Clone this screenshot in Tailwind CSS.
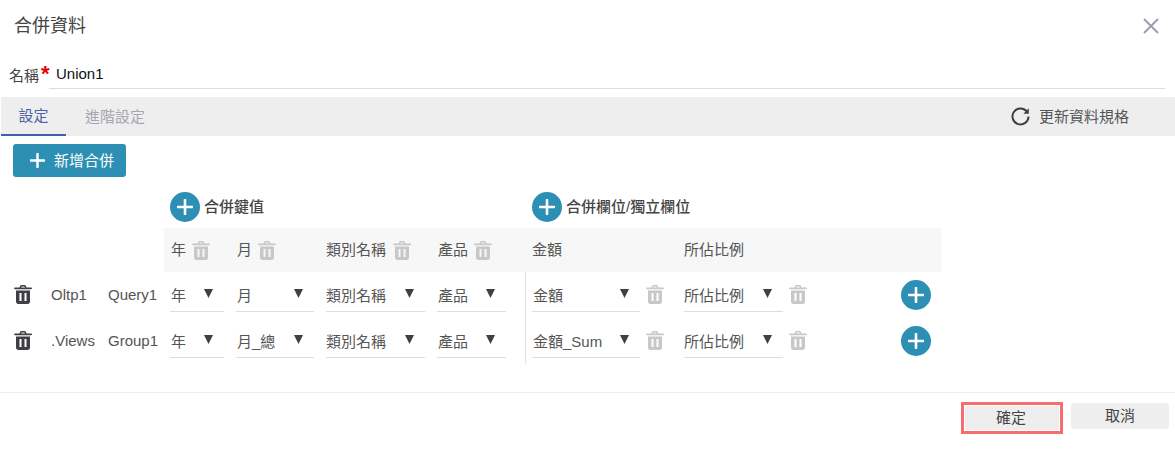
<!DOCTYPE html>
<html lang="zh-Hant">
<head>
<meta charset="utf-8">
<script src="https://cdn.jsdelivr.net/npm/@tailwindcss/browser@4"></script>
<title>合併資料</title>
</head>
<body class="h-[457px] w-[1175px] overflow-hidden bg-white text-[15px] text-[#555] font-['Liberation_Sans','Noto_Sans_CJK_TC',sans-serif]">
<svg width="0" height="0" class="absolute">
  <symbol id="trash" viewBox="0 0 18 19"><path fill-rule="evenodd" d="M5.5 2.4 6.2.8C6.4.3 6.8 0 7.3 0h3.4c.5 0 .9.3 1.1.8l.7 1.6H17c.6 0 1 .4 1 .9s-.4.9-1 .9H1c-.6 0-1-.4-1-.9s.4-.9 1-.9h4.5Zm1.6 0h3.8l-.4-1H7.500ZM2 5.500h14V16.500c0 1.400-1 2.500-2.300 2.500H4.300C3 19 2 17.900 2 16.500V5.500Zm3.500 2.500v8h2V8h-2Zm5 0v8h2V8h-2Z"/></symbol>
  <symbol id="plus" viewBox="0 0 16 16"><path d="M8 1v14M1 8h14" fill="none" stroke="currentColor" stroke-width="2.600" stroke-linecap="round"/></symbol>
  <symbol id="caret" viewBox="0 0 9 9"><path d="M0 0h9L4.500 9Z"/></symbol>
</svg>

<header class="flex h-[52px] items-center justify-between pl-[14px] pr-[16px]">
  <h1 class="text-[18px] font-normal text-[#444]">合併資料</h1>
  <svg class="h-[16px] w-[16px] text-[#9a9aae]" viewBox="0 0 16 16"><path d="M1 1l14 14M15 1 1 15" stroke="currentColor" stroke-width="1.800" fill="none"/></svg>
</header>

<div class="flex h-[37px] items-center pl-[9px] pr-[10px]">
  <span class="mt-[12px] text-[#444]">名稱</span>
  <span class="mt-[7px] ml-[2px] w-[8px] text-[22px] font-bold leading-none text-[#e8000b]">*</span>
  <div class="flex h-[37px] flex-1 items-center border-b border-[#ddd] pl-[7px] pt-[8px] text-[#111]">Union1</div>
</div>

<nav class="ml-px mt-[8px] flex h-[39px] items-stretch justify-between bg-[#eeeeee]">
  <div class="flex">
    <div class="flex w-[65px] items-center justify-center border-b-2 border-[#4060a8] pt-[2px] text-[#4a62a8]">設定</div>
    <div class="ml-[19px] flex items-center pt-[2px] text-[#a6a6b0]">進階設定</div>
  </div>
  <div class="flex items-center pr-[46px] text-[#555]">
    <svg class="mr-[9px] h-[19px] w-[19px] text-[#3f3f48]" viewBox="0 0 19 19"><path d="M15.700 4.400A8 8 0 1 0 17.500 9.500" fill="none" stroke="currentColor" stroke-width="2"/><path d="M17.800 1.300v5.400h-5.400Z" fill="currentColor"/></svg>
    <span class="pt-px">更新資料規格</span>
  </div>
</nav>

<button class="ml-[13px] mt-[8px] flex h-[33px] w-[113px] items-center rounded-[3px] bg-[#2d8fb3] pl-[17px] text-white">
  <svg class="h-[15px] w-[15px]"><use href="#plus"/></svg>
  <span class="ml-[9px] pt-[2px]">新增合併</span>
</button>

<section class="mt-[15px] flex h-[30px] items-center font-medium text-[#444]">
  <div class="ml-[170px] flex h-[30px] w-[30px] items-center justify-center rounded-full bg-[#2d8fb3] text-white"><svg class="h-[16px] w-[16px]"><use href="#plus"/></svg></div>
  <span class="ml-[4px] w-[328px] pt-px">合併鍵值</span>
  <div class="flex h-[30px] w-[30px] items-center justify-center rounded-full bg-[#2d8fb3] text-white"><svg class="h-[16px] w-[16px]"><use href="#plus"/></svg></div>
  <span class="ml-[4px] pt-px">合併欄位/獨立欄位</span>
</section>

<div class="ml-[164px] mt-[6px] flex h-[44px] w-[777px] items-center bg-[#f7f7f7] pt-px text-[#555]">
  <div class="ml-[7px] flex w-[59px] items-center gap-[6px]">年<svg class="h-[19px] w-[18px] text-[#c8c8c8] fill-current"><use href="#trash"/></svg></div>
  <div class="ml-[7px] flex w-[89px] items-center gap-[6px]">月<svg class="h-[19px] w-[18px] text-[#c8c8c8] fill-current"><use href="#trash"/></svg></div>
  <div class="flex w-[112px] items-center gap-[7px]">類別名稱<svg class="h-[19px] w-[18px] text-[#c8c8c8] fill-current"><use href="#trash"/></svg></div>
  <div class="flex w-[94px] items-center gap-[6px]">產品<svg class="h-[19px] w-[18px] text-[#c8c8c8] fill-current"><use href="#trash"/></svg></div>
  <div class="w-[152px]">金額</div>
  <div>所佔比例</div>
</div>

<div class="flex h-[46px] items-start pl-[14px]">
  <svg class="mt-[13px] h-[19px] w-[18px] text-[#3f3f48] fill-current"><use href="#trash"/></svg>
  <span class="ml-[20px] mt-[12px] w-[56px] -translate-x-px">Oltp1</span>
  <span class="mt-[12px] w-[62px]">Query1</span>
  <div class="mt-[6px] flex h-[34px] w-[54px] items-center justify-between border-b border-[#ddd] pl-px pr-[11px] pt-[3px]">年<svg class="mb-[5px] h-[9px] w-[9px] text-[#3f3f48] fill-current"><use href="#caret"/></svg></div>
  <div class="ml-[12px] mt-[6px] flex h-[34px] w-[78px] items-center justify-between border-b border-[#ddd] pl-px pr-[11px] pt-[3px]">月<svg class="mb-[5px] h-[9px] w-[9px] text-[#3f3f48] fill-current"><use href="#caret"/></svg></div>
  <div class="ml-[12px] mt-[6px] flex h-[34px] w-[99px] items-center justify-between border-b border-[#ddd] pr-[11px] pt-[3px]">類別名稱<svg class="mb-[5px] h-[9px] w-[9px] text-[#3f3f48] fill-current"><use href="#caret"/></svg></div>
  <div class="ml-[12px] mt-[6px] flex h-[34px] w-[69px] items-center justify-between border-b border-[#ddd] pl-px pr-[11px] pt-[3px]">產品<svg class="mb-[5px] h-[9px] w-[9px] text-[#3f3f48] fill-current"><use href="#caret"/></svg></div>
  <div class="ml-[19px] h-[46px] w-px bg-[#e4e4e4]"></div>
  <div class="ml-[6px] mt-[6px] flex h-[34px] w-[108px] items-center justify-between border-b border-[#ddd] pl-px pr-[11px] pt-[3px]">金額<svg class="mb-[5px] h-[9px] w-[9px] text-[#3f3f48] fill-current"><use href="#caret"/></svg></div>
  <svg class="ml-[6px] mt-[13px] h-[19px] w-[18px] text-[#c8c8c8] fill-current"><use href="#trash"/></svg>
  <div class="ml-[20px] mt-[6px] flex h-[34px] w-[99px] items-center justify-between border-b border-[#ddd] pr-[11px] pt-[3px]">所佔比例<svg class="mb-[5px] h-[9px] w-[9px] text-[#3f3f48] fill-current"><use href="#caret"/></svg></div>
  <svg class="ml-[6px] mt-[13px] h-[19px] w-[18px] text-[#c8c8c8] fill-current"><use href="#trash"/></svg>
  <div class="ml-[94px] mt-[8px] flex h-[30px] w-[30px] items-center justify-center rounded-full bg-[#2d8fb3] text-white"><svg class="h-[16px] w-[16px]"><use href="#plus"/></svg></div>
</div>

<div class="flex h-[46px] items-start pl-[14px]">
  <svg class="mt-[13px] h-[19px] w-[18px] text-[#3f3f48] fill-current"><use href="#trash"/></svg>
  <span class="ml-[20px] mt-[12px] w-[56px] -translate-x-px">.Views</span>
  <span class="mt-[12px] w-[62px]">Group1</span>
  <div class="mt-[6px] flex h-[34px] w-[54px] items-center justify-between border-b border-[#ddd] pl-px pr-[11px] pt-[3px]">年<svg class="mb-[5px] h-[9px] w-[9px] text-[#3f3f48] fill-current"><use href="#caret"/></svg></div>
  <div class="ml-[12px] mt-[6px] flex h-[34px] w-[78px] items-center justify-between border-b border-[#ddd] pl-px pr-[11px] pt-[3px]">月_總<svg class="mb-[5px] h-[9px] w-[9px] text-[#3f3f48] fill-current"><use href="#caret"/></svg></div>
  <div class="ml-[12px] mt-[6px] flex h-[34px] w-[99px] items-center justify-between border-b border-[#ddd] pr-[11px] pt-[3px]">類別名稱<svg class="mb-[5px] h-[9px] w-[9px] text-[#3f3f48] fill-current"><use href="#caret"/></svg></div>
  <div class="ml-[12px] mt-[6px] flex h-[34px] w-[69px] items-center justify-between border-b border-[#ddd] pl-px pr-[11px] pt-[3px]">產品<svg class="mb-[5px] h-[9px] w-[9px] text-[#3f3f48] fill-current"><use href="#caret"/></svg></div>
  <div class="ml-[19px] h-[46px] w-px bg-[#e4e4e4]"></div>
  <div class="ml-[6px] mt-[6px] flex h-[34px] w-[108px] items-center justify-between border-b border-[#ddd] pl-px pr-[11px] pt-[3px]">金額_Sum<svg class="mb-[5px] h-[9px] w-[9px] text-[#3f3f48] fill-current"><use href="#caret"/></svg></div>
  <svg class="ml-[6px] mt-[13px] h-[19px] w-[18px] text-[#c8c8c8] fill-current"><use href="#trash"/></svg>
  <div class="ml-[20px] mt-[6px] flex h-[34px] w-[99px] items-center justify-between border-b border-[#ddd] pr-[11px] pt-[3px]">所佔比例<svg class="mb-[5px] h-[9px] w-[9px] text-[#3f3f48] fill-current"><use href="#caret"/></svg></div>
  <svg class="ml-[6px] mt-[13px] h-[19px] w-[18px] text-[#c8c8c8] fill-current"><use href="#trash"/></svg>
  <div class="ml-[94px] mt-[8px] flex h-[30px] w-[30px] items-center justify-center rounded-full bg-[#2d8fb3] text-white"><svg class="h-[16px] w-[16px]"><use href="#plus"/></svg></div>
</div>

<footer class="mt-[28px] flex items-start justify-end border-t border-[#eee] pr-[6px] pt-[9px]">
  <div class="h-[32px] w-[102px] border-[3px] border-[#f76c6c] p-px">
    <button class="flex h-full w-full items-center justify-center bg-[#eeeeee] pr-[2px] text-[#444]">確定</button>
  </div>
  <button class="ml-[8px] mt-px flex h-[26px] w-[98px] items-center justify-center rounded-[3px] bg-[#eeeeee] text-[#444]">取消</button>
</footer>
</body>
</html>
